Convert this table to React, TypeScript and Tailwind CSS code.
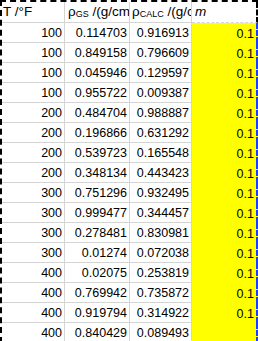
import React from 'react';

const rows: [string, string, string, string][] = [
  ['100', '0.114703', '0.916913', '0.1'],
  ['100', '0.849158', '0.796609', '0.1'],
  ['100', '0.045946', '0.129597', '0.1'],
  ['100', '0.955722', '0.009387', '0.1'],
  ['200', '0.484704', '0.988887', '0.1'],
  ['200', '0.196866', '0.631292', '0.1'],
  ['200', '0.539723', '0.165548', '0.1'],
  ['200', '0.348134', '0.443423', '0.1'],
  ['300', '0.751296', '0.932495', '0.1'],
  ['300', '0.999477', '0.344457', '0.1'],
  ['300', '0.278481', '0.830981', '0.1'],
  ['300', '0.01274', '0.072038', '0.1'],
  ['400', '0.02075', '0.253819', '0.1'],
  ['400', '0.769942', '0.735872', '0.1'],
  ['400', '0.919794', '0.314922', '0.1'],
  ['400', '0.840429', '0.089493', ''],
];

const cell =
  'h-[20px] flex items-end justify-end pr-[2px] pb-[1px] leading-[16px] border-r border-b border-[#d4d4d4] whitespace-nowrap overflow-hidden';

const head =
  'h-[21px] flex items-end pb-[2px] leading-[16px] text-[13.5px] border-r border-b border-[#d4d4d4] whitespace-nowrap overflow-hidden';

export default function App() {
  return (
    <div
      className="w-[258px] h-[341px] overflow-hidden bg-white text-black text-[12.5px]"
      style={{ fontFamily: '"Liberation Sans", Arial, sans-serif' }}
    >
      <div className="border-t-2 border-l-2 border-dashed border-black">
        <div className="grid grid-cols-[63px_65px_62px_66px]">
          {/* header row */}
          <div className={`${head} pl-[1px]`}>T /°F</div>
          <div className={`${head} pl-[3px]`}>
            <span>ρ</span>
            <span className="text-[9px] leading-[12px]">GS</span>
            <span>&nbsp;/(g/cm</span>
          </div>
          <div className={`${head} pl-[2px]`}>
            <span>ρ</span>
            <span className="text-[9px] leading-[12px]">CALC</span>
            <span>&nbsp;/(g/c</span>
          </div>
          <div className="h-[21px] flex items-end pl-[3px] pb-[2px] leading-[16px] text-[13.5px] italic border-r-2 border-dashed border-r-black border-b border-b-[#d4d4d4]">
            m
          </div>
          {rows.map((r, i) => (
            <React.Fragment key={i}>
              <div className={cell}>{r[0]}</div>
              <div className={cell}>{r[1]}</div>
              <div className={cell}>{r[2]}</div>
              <div className="h-[20px] flex items-end justify-end pr-[2px] pb-[1px] leading-[16px] bg-[#ffff00] border-r-2 border-dashed border-[#1f3fff] whitespace-nowrap">
                {r[3]}
              </div>
            </React.Fragment>
          ))}
        </div>
      </div>
    </div>
  );
}
